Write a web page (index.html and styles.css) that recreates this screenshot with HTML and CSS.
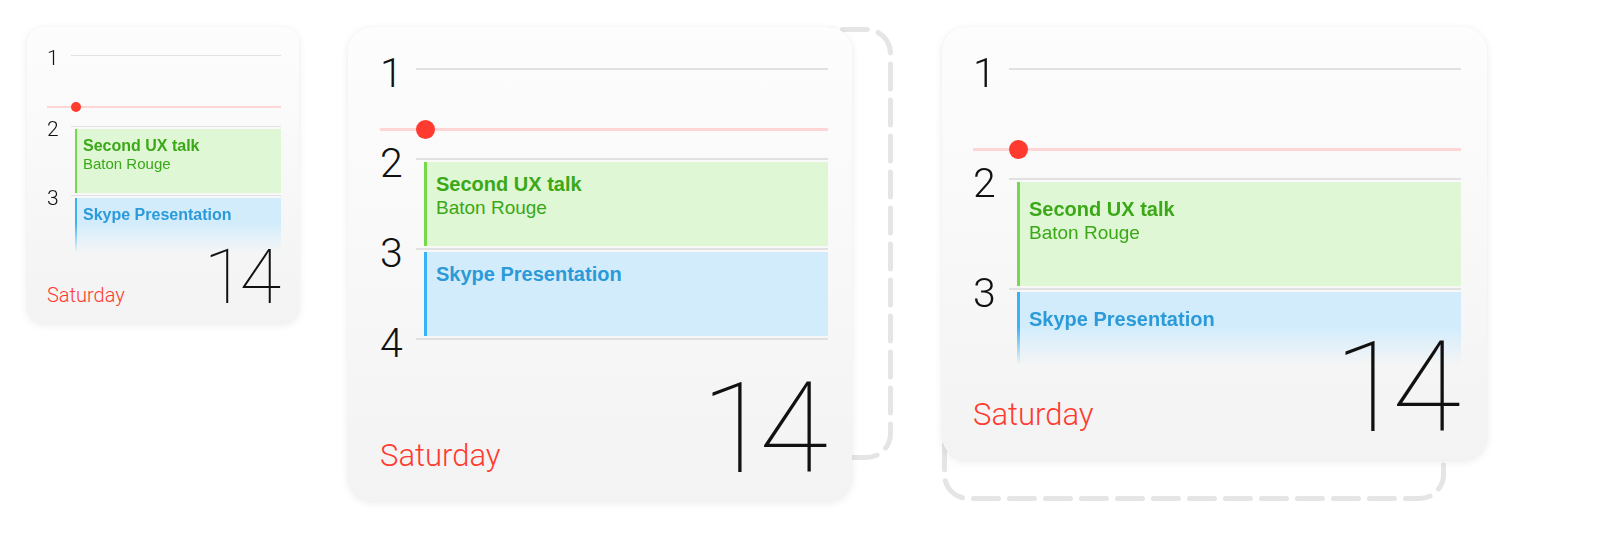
FILE: index.html
```html
<!DOCTYPE html>
<html lang="en">
<head>
    <meta charset="UTF-8" />
    <title>Calendar widgets</title>
    <link rel="stylesheet" href="styles.css">
</head>
<body>
    <div class="board">
        <!-- small widget -->
        <div class="card card-sm">
            <div class="timeline">
                <div class="hour"><span class="hour-num">1</span><span class="rule"></span></div>
                <div class="now"><span class="now-dot"></span></div>
                <div class="hour"><span class="hour-num">2</span><span class="rule"></span></div>
                <div class="event event-green">
                    <div class="event-title">Second UX talk</div>
                    <div class="event-place">Baton Rouge</div>
                </div>
                <div class="hour"><span class="hour-num">3</span><span class="rule"></span></div>
                <div class="event event-blue">
                    <div class="event-title">Skype Presentation</div>
                </div>
            </div>
            <div class="foot">
                <span class="day">Saturday</span>
                <span class="date">14</span>
            </div>
        </div>

        <!-- medium widget, outline shows the wide size -->
        <div class="slot">
            <svg class="ghost" width="545" height="433">
                <rect x="2.5" y="2.5" width="540" height="428" rx="24" />
            </svg>
            <div class="card card-md">
                <div class="timeline">
                    <div class="hour"><span class="hour-num">1</span><span class="rule"></span></div>
                    <div class="now"><span class="now-dot"></span></div>
                    <div class="hour"><span class="hour-num">2</span><span class="rule"></span></div>
                    <div class="event event-green">
                        <div class="event-title">Second UX talk</div>
                        <div class="event-place">Baton Rouge</div>
                    </div>
                    <div class="hour"><span class="hour-num">3</span><span class="rule"></span></div>
                    <div class="event event-blue">
                        <div class="event-title">Skype Presentation</div>
                    </div>
                    <div class="hour"><span class="hour-num">4</span><span class="rule"></span></div>
                </div>
                <div class="foot">
                    <span class="day">Saturday</span>
                    <span class="date">14</span>
                </div>
            </div>
        </div>

        <!-- wide widget, outline shows the medium size -->
        <div class="slot">
            <svg class="ghost" width="504" height="474">
                <rect x="2.5" y="2.5" width="499" height="469" rx="24" />
            </svg>
            <div class="card card-lg">
                <div class="timeline">
                    <div class="hour"><span class="hour-num">1</span><span class="rule"></span></div>
                    <div class="now"><span class="now-dot"></span></div>
                    <div class="hour"><span class="hour-num">2</span><span class="rule"></span></div>
                    <div class="event event-green">
                        <div class="event-title">Second UX talk</div>
                        <div class="event-place">Baton Rouge</div>
                    </div>
                    <div class="hour"><span class="hour-num">3</span><span class="rule"></span></div>
                    <div class="event event-blue">
                        <div class="event-title">Skype Presentation</div>
                    </div>
                </div>
                <div class="foot">
                    <span class="day">Saturday</span>
                    <span class="date">14</span>
                </div>
            </div>
        </div>
    </div>
</body>
</html>
```

FILE: styles.css
```css
* {
    box-sizing: border-box;
}
body {
    margin: 0;
    background: #fff;
    font-family: 'Liberation Sans', Arial, sans-serif;
}
.board {
    display: flex;
    align-items: flex-start;
    gap: 49px;
    padding: 27px;
}
.slot {
    display: grid;
}
.slot > * {
    grid-area: 1 / 1;
}
.ghost {
    display: block;
}
.ghost rect {
    fill: none;
    stroke: #e5e5e5;
    stroke-width: 5;
    stroke-dasharray: 25 11;
    stroke-linecap: round;
}
.card {
    display: grid;
    grid-template-rows: 1fr;
    background: linear-gradient(#fdfdfd, #f3f3f3);
    box-shadow: 0 2px 8px rgba(0, 0, 0, 0.08), 0 0 1px rgba(0, 0, 0, 0.1);
}
.timeline, .foot {
    grid-area: 1 / 1;
}
.timeline {
    align-self: start;
}
/* the faded timeline is masked, keep the date on top of it */
.foot {
    position: relative;
    align-self: end;
    display: flex;
    justify-content: space-between;
    align-items: flex-end;
}
.hour, .now {
    display: grid;
}
.hour-num {
    align-self: center;
    font-family: Roboto, 'Liberation Sans', sans-serif;
    font-weight: 300;
    color: #111;
}
.rule {
    background: #e1e1e1;
}
.now {
    background: #ffd5d5;
}
.now-dot {
    grid-column: 2;
    align-self: center;
    border-radius: 50%;
    background: #ff3b30;
}
.event-green {
    background: #dff7d4;
    border-left: solid #76d84b;
    color: #3aa817;
}
.event-blue {
    background: #d2ecfc;
    border-left: solid #3bb1f6;
    color: #2b9ad8;
}
.event-title {
    font-weight: 700;
}
.day {
    font-family: Roboto, 'Liberation Sans', sans-serif;
    font-weight: 300;
    color: #ff3b30;
}
.date {
    font-family: Roboto, 'Liberation Sans', sans-serif;
    font-weight: 100;
    color: #111;
}

/* small */
.card-sm {
    width: 272px;
    height: 296px;
    padding: 20px 18px 18px 20px;
    border-radius: 16px;
}
.card-sm .timeline {
    height: 206px;
    padding-top: 8px;
    overflow: hidden;
    -webkit-mask-image: linear-gradient(to bottom, #000 calc(100% - 30px), transparent);
    mask-image: linear-gradient(to bottom, #000 calc(100% - 30px), transparent);
}
.card-sm .hour, .card-sm .now {
    grid-template-columns: 24px 1fr;
    grid-template-rows: 1px;
}
.card-sm .hour-num {
    font-size: 21px;
    line-height: 16px;
    padding-top: 5px;
}
.card-sm .now {
    grid-template-rows: 2px;
    margin-top: 50px;
}
.card-sm .now + .hour {
    margin-top: 18px;
}
.card-sm .now-dot {
    width: 10px;
    height: 10px;
}
.card-sm .event {
    height: 64px;
    margin: 2px 0 2px 28px;
    padding: 7px 0 0 6px;
    border-left-width: 2px;
}
.card-sm .event-title {
    font-size: 16px;
    line-height: 19px;
}
.card-sm .event-place {
    font-size: 15px;
    line-height: 18px;
}
.card-sm .day {
    font-size: 20px;
    line-height: 20px;
}
.card-sm .date {
    font-size: 76px;
    line-height: 56px;
    letter-spacing: -6px;
    margin-right: 6px;
}

/* medium and wide share type sizes */
.card-md, .card-lg {
    border-radius: 24px;
}
.card-md .timeline, .card-lg .timeline {
    padding-top: 20px;
}
.card-md .hour, .card-md .now, .card-lg .hour, .card-lg .now {
    grid-template-columns: 36px 1fr;
    grid-template-rows: 2px;
}
.card-md .hour-num, .card-lg .hour-num {
    font-size: 41px;
    line-height: 30px;
    padding-top: 8px;
}
.card-md .now, .card-lg .now {
    grid-template-rows: 3px;
}
.card-md .now-dot, .card-lg .now-dot {
    width: 19px;
    height: 19px;
}
.card-md .event, .card-lg .event {
    margin: 2px 0 2px 44px;
    padding-left: 9px;
    border-left-width: 3px;
}
.card-md .event-title, .card-lg .event-title {
    font-size: 20px;
    line-height: 24px;
}
.card-md .event-place, .card-lg .event-place {
    font-size: 19px;
    line-height: 23px;
}
.card-md .day, .card-lg .day {
    font-size: 31px;
    line-height: 31px;
    margin-bottom: 3px;
}
.card-md .date, .card-lg .date {
    font-size: 126px;
    line-height: 90px;
    letter-spacing: -11px;
    margin-right: 11px;
}

/* medium */
.card-md {
    width: 504px;
    height: 474px;
    padding: 21px 24px 27px 32px;
}
.card-md .timeline {
    padding-bottom: 24px;
}
.card-md .now {
    margin-top: 58px;
}
.card-md .now + .hour {
    margin-top: 27px;
}
.card-md .event {
    height: 84px;
    padding-top: 10px;
}

/* wide */
.card-lg {
    width: 545px;
    height: 433px;
    padding: 21px 26px 27px 31px;
}
.card-lg .timeline {
    height: 317px;
    overflow: hidden;
    -webkit-mask-image: linear-gradient(to bottom, #000 calc(100% - 38px), transparent);
    mask-image: linear-gradient(to bottom, #000 calc(100% - 38px), transparent);
}
.card-lg .now {
    margin-top: 78px;
}
.card-lg .now + .hour {
    margin-top: 27px;
}
.card-lg .event {
    height: 104px;
    padding-top: 15px;
}
```
